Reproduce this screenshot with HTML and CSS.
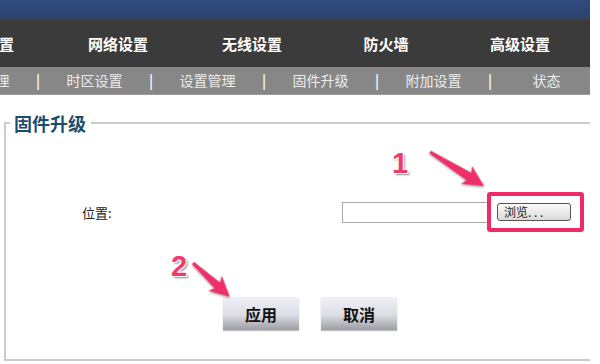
FILE: index.html
```html
<!DOCTYPE html>
<html lang="zh-CN">
<head>
    <meta charset="UTF-8">
    <title>固件升级</title>
    <link rel="stylesheet" href="styles.css">
</head>
<body>
    <div class="page">
        <div class="topbar"></div>

        <!-- Main menu -->
        <nav class="mainnav">
            <a>系统设置</a>
            <a>网络设置</a>
            <a>无线设置</a>
            <a>防火墙</a>
            <a>高级设置</a>
        </nav>

        <!-- Sub menu -->
        <nav class="subnav">
            <a>设置管理</a><span class="sep">|</span>
            <a>时区设置</a><span class="sep">|</span>
            <a>设置管理</a><span class="sep">|</span>
            <a>固件升级</a><span class="sep">|</span>
            <a>附加设置</a><span class="sep">|</span>
            <a>状态</a>
        </nav>

        <fieldset class="panel">
            <legend>固件升级</legend>
            <div class="form-row">
                <label class="label">位置:</label>
                <input class="file-path" type="text">
                <span class="browse-wrap">
                    <button class="browse">浏览. . .</button>
                    <span class="highlight"></span>
                </span>
            </div>
            <div class="actions">
                <button class="btn">应用</button>
                <button class="btn">取消</button>
            </div>
        </fieldset>

        <!-- Step annotations -->
        <span class="step step-1">1</span>
        <span class="step step-2">2</span>
        <svg class="arrows" width="600" height="364" viewBox="0 0 600 364">
            <g transform="translate(430 152) rotate(32.2)">
                <polygon points="0,-1.5 46,-4.5 43,-10.5 64,0 43,10.5 46,4.5 0,1.5" />
            </g>
            <g transform="translate(193 263) rotate(42.6)">
                <polygon points="0,-1.5 33,-4 30,-10 50,0 30,10 33,4 0,1.5" />
            </g>
        </svg>
    </div>
</body>
</html>
```

FILE: styles.css
```css
/* Base */
* {
    margin: 0;
    padding: 0;
    box-sizing: border-box;
}

body {
    background: #fff;
    font-family: "Noto Sans CJK SC", "Liberation Sans", sans-serif;
    overflow: hidden;
}

.page {
    position: relative;
    width: 600px;
    height: 364px;
    overflow: hidden;
}

/* Header bars */
.topbar {
    width: 590px;
    height: 20px;
    background: linear-gradient(#2f4b7e, #2a4473 80%, #3a3f4c);
}

.mainnav {
    display: flex;
    width: 590px;
    height: 47px;
    background: #3b3b3b;
    overflow: hidden;
}

.mainnav a {
    flex: 0 0 134px;
    line-height: 47px;
    text-align: center;
    color: #fff;
    font-size: 15px;
    font-weight: bold;
}

.mainnav a:first-child {
    margin-left: -83px;
}

.subnav {
    display: flex;
    width: 590px;
    height: 28px;
    background: #878787;
    overflow: hidden;
    border-bottom: 1px solid #9a9a9a;
}

.subnav a,
.subnav .sep {
    line-height: 27px;
    text-align: center;
    color: #ececec;
    font-size: 14px;
    white-space: nowrap;
}

.subnav a {
    flex: 0 0 85px;
}

.subnav a:first-child {
    margin-left: -61px;
}

.subnav .sep {
    flex: 0 0 28px;
    font-weight: bold;
    color: #f4f4f4;
}

/* Firmware panel */
.panel {
    width: 586px;
    margin: 16px 0 0 4px;
    padding: 0 0 29px;
    border: 2px solid #cbcbcb;
    border-right: none;
}

.panel legend {
    margin-left: 4px;
    padding: 0 5px 0 4px;
    color: #1d4d6c;
    font-size: 18px;
    font-weight: bold;
    line-height: 24px;
}

.form-row {
    display: flex;
    align-items: center;
    height: 22px;
    margin-top: 66px;
}

.label {
    width: 260px;
    margin-left: 76px;
    font-size: 13px;
    color: #222;
}

.file-path {
    width: 148px;
    height: 21px;
    border: 1px solid #a8a8a8;
    background: #fff;
}

.browse-wrap {
    position: relative;
    margin-left: 7px;
}

.browse {
    display: block;
    width: 74px;
    height: 18px;
    border: 1px solid #555;
    border-radius: 3px;
    background: linear-gradient(#fbfbfb, #dadada);
    font-family: "Noto Sans CJK SC", sans-serif;
    font-size: 12px;
    line-height: 16px;
    color: #222;
    text-align: left;
    padding-left: 6px;
}

.highlight {
    position: absolute;
    top: -11px;
    right: -13px;
    bottom: -11px;
    left: -10px;
    border: 4px solid #ee2b67;
    border-radius: 3px;
}

.actions {
    display: flex;
    gap: 22px;
    margin: 74px 0 0 217px;
}

.btn {
    width: 76px;
    height: 33px;
    border: none;
    background: linear-gradient(#f0f0f7, #dcdce4 55%, #9d9da5);
    box-shadow: 0 1px 1px rgba(0, 0, 0, 0.25);
    font-family: "Noto Sans CJK SC", sans-serif;
    font-size: 16px;
    font-weight: bold;
    color: #111;
}

/* Annotations */
.step {
    position: absolute;
    font-family: "Liberation Sans", sans-serif;
    font-size: 29px;
    font-weight: bold;
    line-height: 1;
    color: #f03a6c;
    text-shadow: -1px -1px 0 #fff, 1px -1px 0 #fff, -1px 1px 0 #fff, 1px 1px 0 #fff, 2px 2px 2px rgba(0, 0, 0, 0.45);
}

.step-1 {
    left: 392px;
    top: 149px;
}

.step-2 {
    left: 171px;
    top: 252px;
}

.arrows {
    position: absolute;
    top: 0;
    left: 0;
    pointer-events: none;
}

.arrows polygon {
    fill: #ef2f69;
    filter: drop-shadow(1px 1px 1px rgba(0, 0, 0, 0.35));
}
```
